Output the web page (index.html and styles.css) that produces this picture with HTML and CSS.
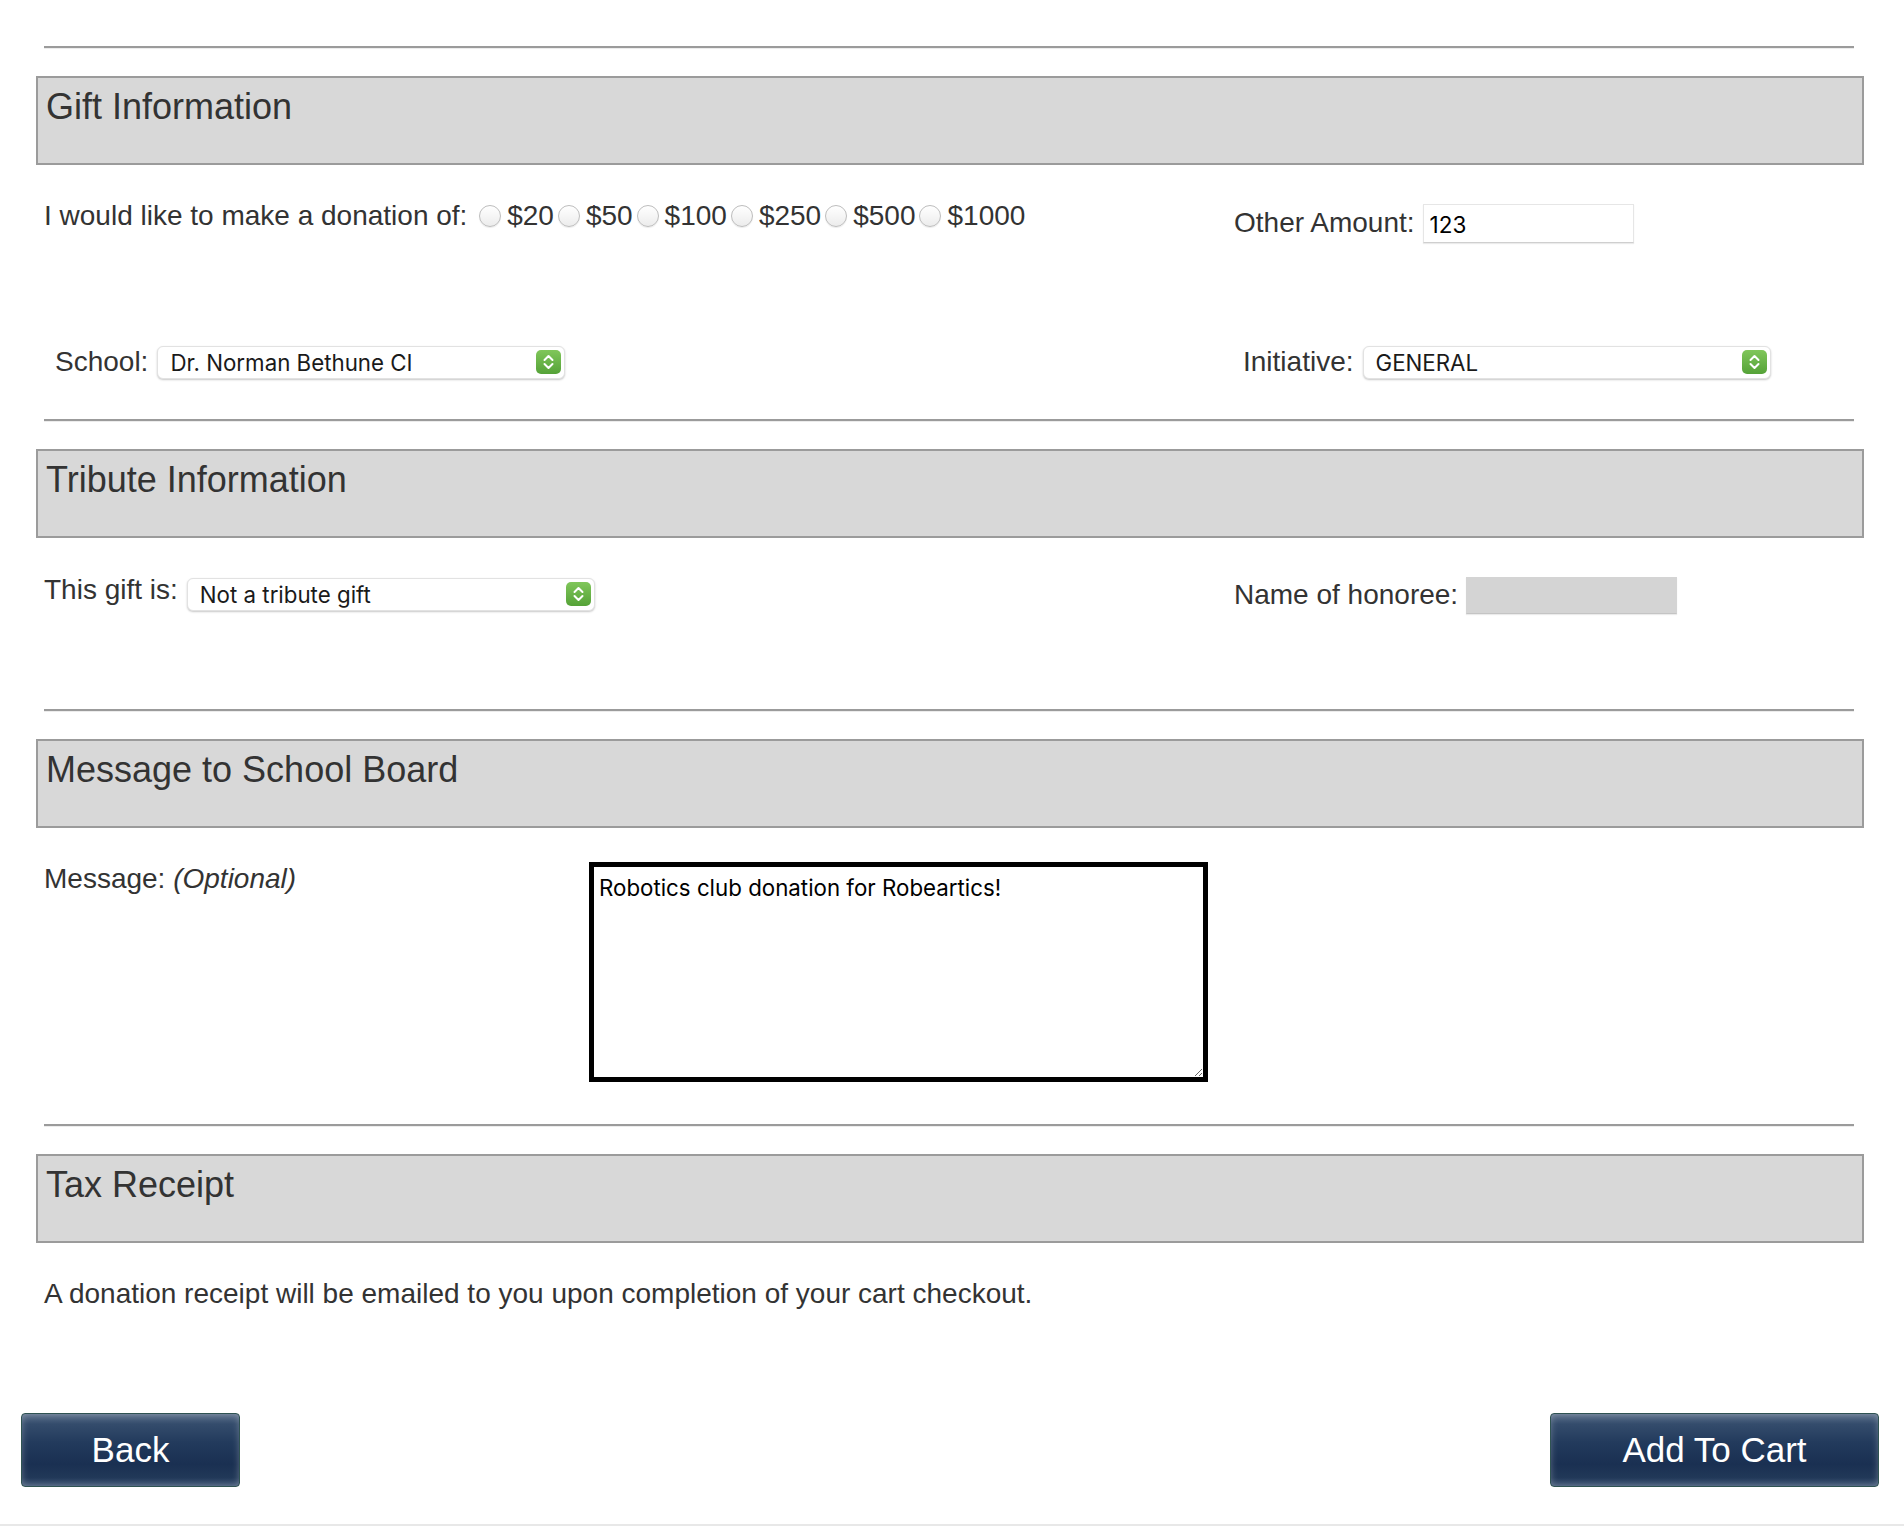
FILE: index.html
```html
<!DOCTYPE html>
<html lang="en">
<head>
<meta charset="utf-8">
<title>Gift Information</title>
<link rel="stylesheet" href="styles.css">
</head>
<body>
<div class="page">
  <hr class="rule rule-first">
  <h2 class="section-title">Gift Information</h2>
  <div class="row row-donation">
    <div class="cell cell-text">I would like to make a donation of: <label class="opt"><input type="radio" name="amt" class="radio">$20</label><label class="opt"><input type="radio" name="amt" class="radio">$50</label><label class="opt"><input type="radio" name="amt" class="radio">$100</label><label class="opt"><input type="radio" name="amt" class="radio">$250</label><label class="opt"><input type="radio" name="amt" class="radio">$500</label><label class="opt"><input type="radio" name="amt" class="radio">$1000</label></div>
    <div class="cell cell-field cell-other">
      <span class="label">Other Amount:</span>
      <input class="text-input" type="text" value="123">
    </div>
  </div>
  <div class="row row-school">
    <div class="cell cell-field">
      <span class="label">School:</span>
      <span class="select">
        <select class="select-box"><option>Dr. Norman Bethune CI</option></select>
        <svg class="stepper" width="25" height="24" viewBox="0 0 25 24"><defs><linearGradient id="g1" x1="0" y1="0" x2="0" y2="1"><stop offset="0" stop-color="#80c65a"/><stop offset="1" stop-color="#55a238"/></linearGradient></defs><rect x="0" y="0" width="25" height="24" rx="5" fill="url(#g1)"/><polyline points="8.5,10 12.5,6 16.5,10" fill="none" stroke="#fff" stroke-width="2" stroke-linecap="round" stroke-linejoin="round"/><polyline points="8.5,14 12.5,18 16.5,14" fill="none" stroke="#fff" stroke-width="2" stroke-linecap="round" stroke-linejoin="round"/></svg>
      </span>
    </div>
    <div class="cell cell-field">
      <span class="label">Initiative:</span>
      <span class="select">
        <select class="select-box"><option>GENERAL</option></select>
        <svg class="stepper" width="25" height="24" viewBox="0 0 25 24"><defs><linearGradient id="g2" x1="0" y1="0" x2="0" y2="1"><stop offset="0" stop-color="#80c65a"/><stop offset="1" stop-color="#55a238"/></linearGradient></defs><rect x="0" y="0" width="25" height="24" rx="5" fill="url(#g2)"/><polyline points="8.5,10 12.5,6 16.5,10" fill="none" stroke="#fff" stroke-width="2" stroke-linecap="round" stroke-linejoin="round"/><polyline points="8.5,14 12.5,18 16.5,14" fill="none" stroke="#fff" stroke-width="2" stroke-linecap="round" stroke-linejoin="round"/></svg>
      </span>
    </div>
  </div>

  <hr class="rule rule-2">
  <h2 class="section-title">Tribute Information</h2>
  <div class="row row-tribute">
    <div class="cell cell-top">
      <span class="label">This gift is:</span>
      <span class="select select-tribute">
        <select class="select-box"><option>Not a tribute gift</option></select>
        <svg class="stepper" width="25" height="24" viewBox="0 0 25 24"><defs><linearGradient id="g3" x1="0" y1="0" x2="0" y2="1"><stop offset="0" stop-color="#80c65a"/><stop offset="1" stop-color="#55a238"/></linearGradient></defs><rect x="0" y="0" width="25" height="24" rx="5" fill="url(#g3)"/><polyline points="8.5,10 12.5,6 16.5,10" fill="none" stroke="#fff" stroke-width="2" stroke-linecap="round" stroke-linejoin="round"/><polyline points="8.5,14 12.5,18 16.5,14" fill="none" stroke="#fff" stroke-width="2" stroke-linecap="round" stroke-linejoin="round"/></svg>
      </span>
    </div>
    <div class="cell cell-field cell-honoree">
      <span class="label">Name of honoree:</span>
      <input class="text-input text-input-disabled" type="text" disabled>
    </div>
  </div>

  <hr class="rule rule-3">
  <h2 class="section-title">Message to School Board</h2>
  <div class="row row-message">
    <div class="cell cell-text">Message: <em>(Optional)</em></div>
    <div class="cell">
      <textarea class="message">Robotics club donation for Robeartics!</textarea>
    </div>
  </div>

  <hr class="rule rule-4">
  <h2 class="section-title">Tax Receipt</h2>
  <p class="receipt">A donation receipt will be emailed to you upon completion of your cart checkout.</p>
</div>
<div class="actions">
  <button class="btn btn-back" type="button">Back</button>
  <button class="btn btn-cart" type="button">Add To Cart</button>
</div>
<div class="footer-line"></div>
</body>
</html>
```

FILE: styles.css
```css
html, body {
  margin: 0;
  padding: 0;
  background: #fff;
}
body {
  font-family: "Liberation Sans", Arial, Helvetica, sans-serif;
  font-size: 28px;
  color: #333;
}
.page {
  display: flow-root;
  padding: 0 40px 0 36px;
}
.rule {
  height: 0;
  margin: 0 10px 0 8px;
  border: 0;
  border-top: 2px solid #9b9b9b;
  border-bottom: 1px solid #ececec;
}
.rule-first { margin-top: 46px; }
.rule-2 { margin-top: 37px; }
.rule-3 { margin-top: 94px; }
.rule-4 { margin-top: 42px; }

.section-title {
  margin: 27px 0 0 0;
  padding: 9px 8px 36px 8px;
  height: 40px;
  line-height: 40px;
  font-size: 36px;
  font-weight: normal;
  color: #333;
  background: #d8d8d8;
  border: 2px solid #9b9b9b;
}

.row {
  display: grid;
  grid-template-columns: 1190px 1fr;
  align-items: start;
  padding-left: 8px;
}
.row-donation { margin-top: 31px; }
.row-school { margin-top: 99px; padding-left: 19px; grid-template-columns: 1188px 1fr; }
.row-tribute { margin-top: 32px; }
.row-message { margin-top: 31px; grid-template-columns: 545px 1fr; }

.cell-text {
  line-height: 40px;
  white-space: nowrap;
}
.cell-field {
  display: flex;
  align-items: center;
  gap: 9px;
  line-height: 40px;
  white-space: nowrap;
}
.cell-other { margin-top: 7px; gap: 8px; }
.cell-honoree { margin-top: 5px; gap: 8px; }
.cell-top {
  display: flex;
  align-items: flex-start;
  gap: 9px;
  line-height: 40px;
  white-space: nowrap;
}
.select-tribute { margin-top: 8px; }

.opt {
  white-space: nowrap;
}
.radio {
  appearance: none;
  -webkit-appearance: none;
  width: 22px;
  height: 22px;
  margin: 0 6px 0 4px;
  border: 1px solid #bdbdbd;
  border-radius: 50%;
  background: linear-gradient(#ffffff, #ececec);
  box-shadow: 0 1px 1px rgba(0,0,0,0.08);
  vertical-align: middle;
  position: relative;
  top: -2px;
}

.text-input {
  box-sizing: border-box;
  width: 211px;
  height: 39px;
  margin: 0;
  padding: 2px 6px 0 6px;
  border: 1px solid #e6e6e6;
  border-bottom-color: #cfcfcf;
  box-shadow: 0 1px 1px rgba(0,0,0,0.08);
  background: #fff;
  font-family: Inter, "Noto Sans", sans-serif;
  font-size: 22.5px;
  color: #000;
  outline: none;
}
.text-input-disabled {
  height: 37px;
  background: #d4d4d4;
  border-color: #d4d4d4;
  border-bottom-color: #c4c4c4;
}

.select {
  position: relative;
  display: block;
  width: 408px;
  height: 33px;
  line-height: normal;
}
.select-box {
  appearance: none;
  -webkit-appearance: none;
  box-sizing: border-box;
  display: block;
  width: 100%;
  height: 100%;
  margin: 0;
  padding: 0 40px 0 12px;
  border: 1px solid #e2e2e2;
  border-radius: 6px;
  box-shadow: 0 1px 2px rgba(0,0,0,0.22);
  background: #fff;
  font-family: Inter, "Noto Sans", sans-serif;
  font-size: 22.3px;
  color: #1a1a1a;
  outline: none;
}
.stepper {
  position: absolute;
  right: 4px;
  top: 4px;
}

.cell-text em {
  font-style: italic;
}
.message {
  box-sizing: border-box;
  display: block;
  width: 619px;
  height: 220px;
  margin: 3px 0 0 0;
  padding: 7px 5px;
  border: 5px solid #000;
  font-family: Inter, "Noto Sans", sans-serif;
  font-size: 22.3px;
  color: #000;
  background: #fff;
  outline: none;
}

.receipt {
  margin: 31px 0 0 8px;
  line-height: 40px;
}

.actions {
  display: flex;
  justify-content: space-between;
  padding: 0 25px 0 21px;
  margin-top: 99px;
}
.btn {
  height: 74px;
  margin: 0;
  padding: 0;
  border: 1px solid #2f5352;
  border-radius: 4px;
  background: linear-gradient(#5b6f8a 0%, #344c6c 14%, #223a5c 40%, #1a3052 70%, #213858 88%, #3d5373 100%);
  box-shadow: inset 0 0 7px rgba(255,255,255,0.28);
  color: #fff;
  font-family: "Liberation Sans", Arial, Helvetica, sans-serif;
  font-size: 35px;
  text-align: center;
  cursor: pointer;
}
.btn-back { width: 219px; }
.btn-cart { width: 329px; }

.footer-line {
  margin-top: 37px;
  height: 2px;
  background: #e8e8e8;
}
```
